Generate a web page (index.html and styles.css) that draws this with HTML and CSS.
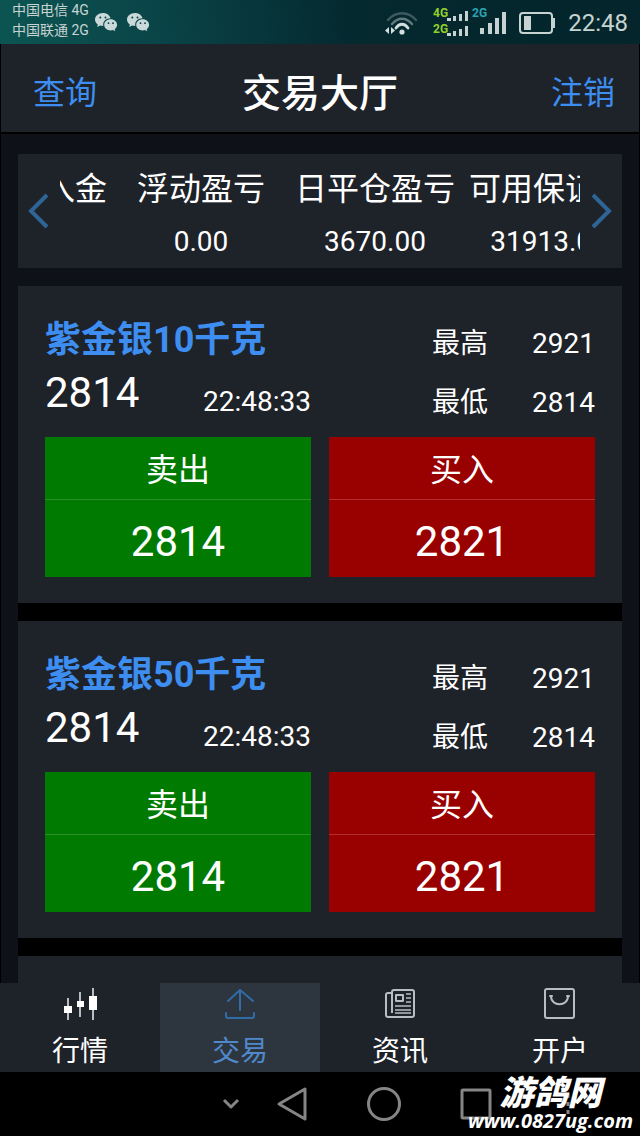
FILE: index.html
```html
<!DOCTYPE html>
<html lang="zh-CN">
<head>
    <meta charset="UTF-8">
    <meta name="viewport" content="width=device-width, initial-scale=1.0">
    <title>交易大厅</title>
    <link rel="stylesheet" href="styles.css">
</head>
<body>

<svg class="symbols" aria-hidden="true">
    <symbol id="chat" viewBox="0 0 24 20">
        <path d="M9 1C4.300 1 1 4 1 7.600c0 2 1.100 3.700 2.800 4.900L3.200 15l2.900-1.500c1 .3 2 .4 3.200.4C8.500 9.500 12 6.200 16.600 6.300 15.800 3.200 12.800 1 9 1z" fill="#c9d8d8"/>
        <path d="M16.700 7.200c-3.700 0-6.500 2.500-6.500 5.600s2.800 5.600 6.500 5.600c.8 0 1.600-.1 2.300-.4l2.300 1.200-.6-2c1.500-1 2.400-2.600 2.400-4.400 0-3.100-2.800-5.600-6.400-5.600z" fill="#c9d8d8"/>
        <g fill="#0b4447">
            <circle cx="6.300" cy="5.600" r="1"/>
            <circle cx="11.500" cy="5.600" r="1"/>
            <circle cx="14.500" cy="11.200" r=".9"/>
            <circle cx="19" cy="11.200" r=".9"/>
        </g>
    </symbol>
</svg>

<div class="phone">
    <div class="status-bar">
        <div class="carriers">
            <div>中国电信 4G</div>
            <div>中国联通 2G</div>
        </div>
        <svg class="chat-icon" width="24" height="20"><use href="#chat"/></svg>
        <svg class="chat-icon" width="24" height="20"><use href="#chat"/></svg>

        <div class="status-right">
            <svg width="34" height="26" viewBox="0 0 34 26" fill="none" stroke-linecap="round">
                <path d="M4 10c8-9 20-9 28 0" stroke="#3d5a5e" stroke-width="2.500"/>
                <path d="M8 14c6-7 14-7 20 0" stroke="#5f797c" stroke-width="2.500"/>
                <path d="M12 18c3.500-5 8.500-5 12 0" stroke="#d3dfdf" stroke-width="2.800"/>
                <circle cx="18" cy="22" r="2.600" fill="#d3dfdf"/>
                <path d="M5 17v7l-4-3.500zM7 17v7l4-3.500z" fill="#d3dfdf"/>
            </svg>
            <svg class="signal" width="76" height="36" viewBox="0 0 76 36">
                <text x="0" y="12" fill="#93cf2c">4G</text>
                <text x="0" y="28" fill="#93cf2c">2G</text>
                <text x="39" y="12" fill="#2ba3b3">2G</text>
                <g fill="#c7d3d1">
                    <rect x="14" y="13" width="4" height="3"/>
                    <rect x="20" y="11" width="3" height="5"/>
                    <rect x="26" y="9" width="3" height="7"/>
                    <rect x="32" y="6" width="3" height="10"/>
                    <rect x="14" y="28" width="4" height="3"/>
                    <rect x="20" y="26" width="3" height="5"/>
                    <rect x="26" y="24" width="3" height="7"/>
                    <rect x="32" y="21" width="3" height="10"/>
                    <rect x="47" y="23" width="4" height="6"/>
                    <rect x="55" y="18" width="4" height="11"/>
                    <rect x="62" y="13" width="4" height="16"/>
                    <rect x="69" y="7" width="4" height="22"/>
                </g>
            </svg>
            <svg width="37" height="24" viewBox="0 0 37 24">
                <rect x="1" y="2" width="32" height="20" rx="3" fill="none" stroke="#c7d3d1" stroke-width="2"/>
                <rect x="5" y="5" width="7" height="14" fill="#c7d3d1"/>
                <rect x="34" y="7" width="2" height="10" fill="#c7d3d1"/>
            </svg>
            <span class="clock">22:48</span>
        </div>
    </div>

    <header class="title-bar">
        <a href="#query">查询</a>
        <h1>交易大厅</h1>
        <a href="#logout">注销</a>
    </header>

    <main class="content">
        <section class="account">
            <button class="arrow" id="prevButton" aria-label="上一项">
                <svg width="22" height="36" viewBox="0 0 22 36"><path d="M19 2L3 18l16 16"/></svg>
            </button>
            <dl class="figures" id="figures">
                <div><dt>今日出入金</dt><dd>0.00</dd></div>
                <div><dt>浮动盈亏</dt><dd>0.00</dd></div>
                <div><dt>日平仓盈亏</dt><dd>3670.00</dd></div>
                <div><dt>可用保证金</dt><dd>31913.00</dd></div>
            </dl>
            <button class="arrow" id="nextButton" aria-label="下一项">
                <svg width="22" height="36" viewBox="0 0 22 36"><path d="M3 2l16 16L3 34"/></svg>
            </button>
        </section>

        <section class="products">
            <article class="product">
                <div class="quote">
                    <div>
                        <h2>紫金银10千克</h2>
                        <div class="latest">
                            <span class="price">2814</span>
                            <span class="time">22:48:33</span>
                        </div>
                    </div>
                    <dl class="range">
                        <dt>最高</dt><dd>2921</dd>
                        <dt>最低</dt><dd>2814</dd>
                    </dl>
                </div>
                <div class="actions">
                    <button class="trade sell"><span>卖出</span><span class="amount">2814</span></button>
                    <button class="trade buy"><span>买入</span><span class="amount">2821</span></button>
                </div>
            </article>

            <article class="product">
                <div class="quote">
                    <div>
                        <h2>紫金银50千克</h2>
                        <div class="latest">
                            <span class="price">2814</span>
                            <span class="time">22:48:33</span>
                        </div>
                    </div>
                    <dl class="range">
                        <dt>最高</dt><dd>2921</dd>
                        <dt>最低</dt><dd>2814</dd>
                    </dl>
                </div>
                <div class="actions">
                    <button class="trade sell"><span>卖出</span><span class="amount">2814</span></button>
                    <button class="trade buy"><span>买入</span><span class="amount">2821</span></button>
                </div>
            </article>

            <article class="product"></article>
        </section>
    </main>

    <nav class="tabs">
        <a href="#market">
            <svg width="36" height="34" viewBox="0 0 36 34" fill="#fff">
                <path d="M5 11h2v22H5zM17 5h2v25h-2zM30 1h2v32h-2z" fill="#b9bcc0"/>
                <rect x="2" y="19" width="8" height="7"/>
                <rect x="15" y="14" width="7" height="6"/>
                <rect x="27" y="9" width="8" height="14"/>
            </svg>
            <span>行情</span>
        </a>
        <a href="#trade" class="active">
            <svg width="36" height="34" viewBox="0 0 36 34" fill="none" stroke="#2f6ca8" stroke-width="2" stroke-linecap="round" stroke-linejoin="round">
                <path d="M18 23V3M6 14L18 3l13 11M4 26v3q0 2 2 2h24q2 0 2-2v-3"/>
            </svg>
            <span>交易</span>
        </a>
        <a href="#news">
            <svg width="36" height="34" viewBox="0 0 36 34" fill="none" stroke="#b9bcc0" stroke-width="2" stroke-linejoin="round">
                <path d="M10 26V5q0-2 2-2h18q2 0 2 2v23q0 2-2 2H6q-2 0-2-2V8q0-2 2-2h4"/>
                <rect x="14" y="8" width="7" height="6"/>
                <path d="M24 7h5M24 11h5M24 15h5M13 19h16M13 23h16M13 26h16" stroke-width="1.500"/>
            </svg>
            <span>资讯</span>
        </a>
        <a href="#account">
            <svg width="36" height="34" viewBox="0 0 36 34" fill="none" stroke="#b9bcc0" stroke-width="2" stroke-linecap="round">
                <rect x="3" y="2" width="29" height="29" rx="2"/>
                <path d="M9 9c0 11 17 11 17 0"/>
                <path d="M8 9h2M25 9h2"/>
            </svg>
            <span>开户</span>
        </a>
    </nav>

    <div class="system-nav">
        <button class="hide" aria-label="隐藏">
            <svg width="18" height="12" viewBox="0 0 18 12"><path d="M2 2l7 7 7-7"/></svg>
        </button>
        <button aria-label="返回">
            <svg width="32" height="36" viewBox="0 0 32 36"><path d="M29 3v30L3 18z"/></svg>
        </button>
        <button aria-label="主页">
            <svg width="36" height="36" viewBox="0 0 36 36"><circle cx="18" cy="18" r="15.500"/></svg>
        </button>
        <button aria-label="最近任务">
            <svg width="32" height="32" viewBox="0 0 32 32"><rect x="2" y="2" width="28" height="28" rx="1"/></svg>
        </button>
        <button aria-label="菜单">
            <svg width="6" height="24" viewBox="0 0 6 24"><path d="M3 2v4M3 10v4M3 18v4"/></svg>
        </button>
        <div class="watermark">
            <div class="site-name">游鸽网</div>
            <div class="site-url">www.0827ug.com</div>
        </div>
    </div>
</div>

<script>
    const figures = document.getElementById('figures');
    const prevButton = document.getElementById('prevButton');
    const nextButton = document.getElementById('nextButton');

    prevButton.addEventListener('click', () => figures.scrollBy({ left: -174, behavior: 'smooth' }));
    nextButton.addEventListener('click', () => figures.scrollBy({ left: 174, behavior: 'smooth' }));

    figures.scrollLeft = 113;
</script>

</body>
</html>
```
FILE: styles.css
```css
* {
    box-sizing: border-box;
}
body {
    margin: 0;
    background-color: #000;
    color: #fff;
    font-family: Roboto, "Noto Sans CJK SC", sans-serif;
    font-size: 28px;
}
h1, h2, dl, dd {
    margin: 0;
}
a {
    color: #3d8ef0;
    text-decoration: none;
}
button {
    padding: 0;
    border: none;
    background: none;
    color: inherit;
    font: inherit;
    cursor: pointer;
}
svg {
    display: block;
    flex: none;
}
.symbols {
    position: absolute;
    width: 0;
    height: 0;
}
.phone {
    display: flex;
    flex-direction: column;
    height: 100vh;
}

/* status bar */
.status-bar {
    display: flex;
    flex: none;
    height: 44px;
    padding: 0 12px;
    background: linear-gradient(80deg, #0c5553 0%, #0a4448 25%, #04292f 55%, #03252b 100%);
    color: #c7d3d1;
}
.carriers {
    margin-right: 5px;
    font-size: 14px;
    line-height: 20px;
    white-space: nowrap;
}
.chat-icon {
    margin: 12px 8px 0 0;
}
.status-right {
    display: flex;
    align-items: center;
    padding-top: 1px;
    margin-left: auto;
}
.signal {
    margin: 0 10px 0 15px;
    font-size: 12px;
    font-weight: bold;
}
.clock {
    margin-left: 12px;
    font-size: 24px;
}

/* title bar */
.title-bar {
    display: grid;
    flex: none;
    grid-template-columns: 1fr auto 1fr;
    align-items: center;
    height: 90px;
    padding: 4px 24px 0;
    border: solid #000;
    border-width: 0 1px 2px;
    background-color: #1e2229;
    font-size: 32px;
}
.title-bar h1 {
    font-size: 39px;
    font-weight: 500;
}
.title-bar a:first-child {
    padding-left: 8px;
}
.title-bar a:last-child {
    text-align: right;
}

.content {
    flex: 1;
    min-height: 0;
    padding: 20px 17px 0;
    border: solid #000;
    border-width: 0 1px;
    background-color: #0e1118;
    overflow: hidden;
}

/* account figures */
.account {
    display: flex;
    align-items: center;
    height: 114px;
    padding: 0 10px;
    margin-bottom: 18px;
    background-color: #1e2229;
}
.arrow path {
    fill: none;
    stroke: #2f6497;
    stroke-width: 4;
}
.figures {
    display: flex;
    flex: 1;
    gap: 14px;
    padding-top: 8px;
    margin: 0 10px;
    overflow-x: auto;
    scrollbar-width: none;
    text-align: center;
}
.figures div {
    flex: 0 0 160px;
}
.figures dt {
    font-size: 32px;
    line-height: 54px;
    white-space: nowrap;
}
.figures dd {
    line-height: 52px;
}

/* products */
.products {
    display: flex;
    flex-direction: column;
    gap: 18px;
    background-color: #000;
}
.product {
    min-height: 317px;
    padding: 28px 27px 26px;
    background-color: #1e2229;
}
.quote,
.actions {
    display: grid;
    grid-template-columns: 1fr 1fr;
    gap: 18px;
}
.quote {
    margin-bottom: 5px;
}
.product h2 {
    color: #3d8ef0;
    font-size: 36px;
    line-height: 52px;
    white-space: nowrap;
}
.latest {
    display: flex;
    justify-content: space-between;
    align-items: flex-end;
}
.price {
    font-size: 42px;
    line-height: 54px;
}
.time {
    line-height: 36px;
}
.range {
    display: grid;
    grid-template-columns: auto auto;
    justify-content: end;
    column-gap: 44px;
    line-height: 59px;
}
.trade {
    display: flex;
    flex-direction: column;
    padding-top: 4px;
    font-size: 32px;
    line-height: 58px;
}
.trade span {
    width: 100%;
}
.trade .amount {
    padding-top: 6px;
    border-top: 1px solid #2a8f2a;
    font-size: 42px;
    line-height: 71px;
}
.sell {
    background-color: #007a00;
}
.buy {
    background-color: #990000;
}
.trade.buy .amount {
    border-color: #b33030;
}

/* bottom tabs */
.tabs {
    display: grid;
    flex: none;
    grid-template-columns: repeat(4, 1fr);
    background-color: #1e2229;
}
.tabs a {
    display: flex;
    flex-direction: column;
    align-items: center;
    padding-top: 4px;
    color: #fff;
    line-height: 40px;
}
.tabs svg {
    margin-bottom: 11px;
}
.tabs .active {
    background-color: #2d363f;
    color: #5088cc;
}

/* android buttons */
.system-nav {
    position: relative;
    display: flex;
    flex: none;
    justify-content: flex-end;
    height: 64px;
    padding-right: 26px;
}
.system-nav button {
    display: flex;
    justify-content: center;
    align-items: center;
    width: 92px;
}
.system-nav .hide {
    width: 30px;
}
.system-nav path,
.system-nav circle,
.system-nav rect {
    fill: none;
    stroke: #858585;
    stroke-width: 3;
    stroke-linejoin: round;
}
.watermark {
    position: absolute;
    right: 7px;
    bottom: 3px;
    font-style: italic;
    font-weight: bold;
    text-align: center;
}
.site-name {
    font-size: 34px;
    font-weight: 900;
    line-height: 32px;
}
.site-url {
    font-family: "Open Sans", "Noto Sans", sans-serif;
    font-size: 20px;
    line-height: 24px;
}
```
